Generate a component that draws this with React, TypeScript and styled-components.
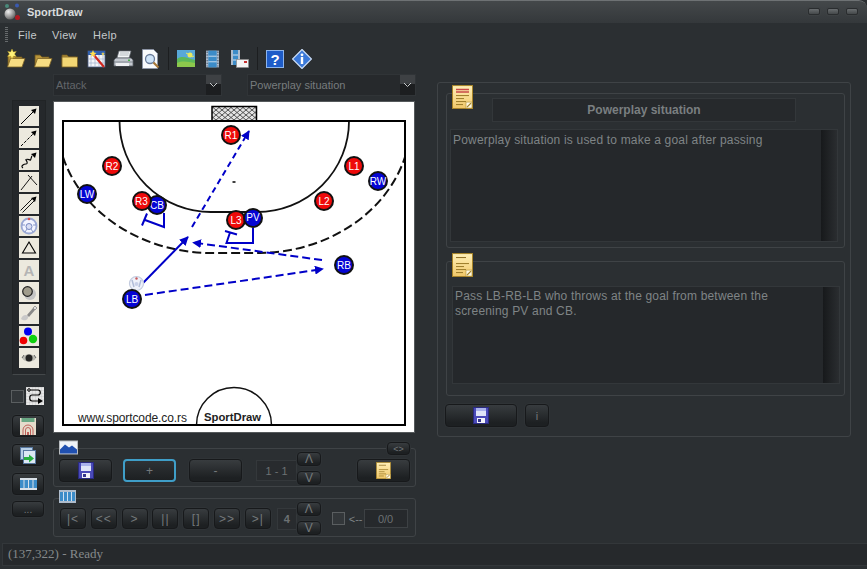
import React from "react";
import styled, { createGlobalStyle, css } from "styled-components";

const GlobalStyle = createGlobalStyle`
  html, body { margin: 0; padding: 0; background: #2b2f32; }
  * { box-sizing: border-box; }
`;

const BLUE = "#0000c8";

/* ---------- small drawings ---------- */

const Floppy: React.FC = () => (
  <svg width="16" height="17" viewBox="0 0 16 17">
    <rect x="0.5" y="0.5" width="15" height="16" fill="#4a4ab8" stroke="#2a2a80" />
    <rect x="3" y="1" width="10" height="8" fill="#dfe4f8" />
    <rect x="3" y="1" width="10" height="3" fill="#aab2ec" />
    <rect x="4" y="11" width="8" height="5" fill="#f2f2f8" />
    <rect x="5" y="12" width="3" height="3" fill="#34348c" />
  </svg>
);

const NoteIcon: React.FC<{ size?: number; red?: boolean }> = ({ size = 21, red }) => (
  <svg width={size} height={size * 1.15} viewBox="0 0 21 24">
    <defs>
      <linearGradient id={red ? "noteR" : "noteY"} x1="0" y1="0" x2="0" y2="1">
        <stop offset="0" stopColor="#fff0b8" />
        <stop offset="1" stopColor="#f0c768" />
      </linearGradient>
    </defs>
    <rect x="0.5" y="0.5" width="20" height="23" fill={`url(#${red ? "noteR" : "noteY"})`} stroke="#a88428" />
    {red ? (
      <path d="M4 4.5h13M4 7h13" stroke="#c84848" strokeWidth="1.4" />
    ) : (
      <path d="M4 4.5h10" stroke="#8a6a20" strokeWidth="1" />
    )}
    <path d="M4 10.5h13M4 13.5h8M4 16.5h10M4 19.5h7" stroke="#9a7a28" strokeWidth="1" />
    <rect x="14" y="17" width="6" height="6" fill="#fff8e0" stroke="#b09030" strokeWidth="0.6" />
    <path d="M15 22l4-4" stroke="#a08028" strokeWidth="1.2" />
  </svg>
);

const Folder: React.FC<{ open?: boolean; star?: boolean }> = ({ open, star }) => (
  <svg width="20" height="20" viewBox="0 0 20 20">
    <path d="M2 6h5l2 2h7v9H2z" fill="#b8943a" stroke="#6a5420" strokeWidth="0.8" />
    {open ? (
      <path d="M4.5 9.500h14.500l-3 8.500H1.500z" fill="#f6dc82" stroke="#7a6024" strokeWidth="0.8" />
    ) : (
      <rect x="2" y="8" width="15.5" height="10" fill="#f2d674" stroke="#7a6024" strokeWidth="0.8" />
    )}
    {star && <path d="M6 0l1.300 3 3-.6-1.800 2.600 1.800 2.600-3-.6L6 10 4.700 7l-3 .6 1.800-2.600-1.800-2.600 3 .6z" fill="#fff27a" stroke="#c9a820" strokeWidth="0.4" />}
  </svg>
);

const WandIcon: React.FC = () => (
  <svg width="20" height="20" viewBox="0 0 20 20">
    <rect x="1" y="2" width="17" height="16" fill="#f4f6fa" stroke="#4a5a80" strokeWidth="0.8" />
    <rect x="1" y="2" width="17" height="4" fill="#2f5fb0" />
    <path d="M4 6v12M8 6v12M12 6v12M16 6v12M1 10h17M1 14h17" stroke="#9fb0cc" strokeWidth="0.7" />
    <path d="M6 5l11 13" stroke="#d02820" strokeWidth="2.2" />
    <path d="M6 1l1 2.500 2.500.5-2 1.500.5 2.500-2-1.500-2 1.500.5-2.500-2-1.500 2.500-.5z" fill="#ffe050" />
    <path d="M16 3l.7 1.500 1.300.3-1.300.8-.7 1.400-.7-1.400-1.300-.8 1.300-.3z" fill="#ffe050" />
  </svg>
);

const PrinterIcon: React.FC = () => (
  <svg width="21" height="20" viewBox="0 0 21 20">
    <path d="M6 2h12l-2 7H4z" fill="#f4f6f8" stroke="#6a7078" strokeWidth="0.7" />
    <path d="M7 4h9M6.500 6h9" stroke="#9aa0a8" strokeWidth="0.7" />
    <path d="M3 9h15l2 2v6H1v-6z" fill="#c4c9d0" stroke="#5a6068" strokeWidth="0.8" />
    <path d="M1 13h19" stroke="#70767e" strokeWidth="0.8" />
    <rect x="3" y="14" width="13" height="3" fill="#eef0f3" />
    <rect x="15" y="10.500" width="2" height="1.500" fill="#48b048" />
  </svg>
);

const PreviewIcon: React.FC = () => (
  <svg width="20" height="20" viewBox="0 0 20 20">
    <path d="M1.500 0.500h11l4 4v15h-15z" fill="#f8fafc" stroke="#8a94a8" strokeWidth="0.8" />
    <circle cx="9" cy="10" r="4.500" fill="#cfe4f8" stroke="#6a7c9a" strokeWidth="1.300" />
    <path d="M12.500 13.500l5 5" stroke="#a87838" strokeWidth="2.200" />
  </svg>
);

const PictureIcon: React.FC = () => (
  <svg width="18" height="17" viewBox="0 0 18 17">
    <rect width="18" height="17" fill="#58a8d8" />
    <path d="M0 9c5-4 10-1 18 1v7H0z" fill="#5cb85a" />
    <path d="M0 13c6-3 12-1 18 0v4H0z" fill="#8cc84c" />
    <circle cx="13" cy="5" r="2.500" fill="#e8e860" />
    <path d="M9 3l2 1M15 7l2-1" stroke="#e8e860" />
  </svg>
);

const FilmIcon: React.FC = () => (
  <svg width="13" height="18" viewBox="0 0 14 18">
    <rect width="14" height="18" fill="#aebccc" />
    <rect x="2.500" width="9" height="18" fill="#3c8cc8" />
    <path d="M2.500 6h9M2.500 12h9" stroke="#cfe0f0" />
    <path d="M1.200 1v16M12.800 1v16" stroke="#4a5a70" strokeWidth="1.200" strokeDasharray="1.500 1.500" />
  </svg>
);

const FilmMailIcon: React.FC = () => (
  <svg width="18" height="18" viewBox="0 0 18 18">
    <rect width="9" height="15" fill="#aebccc" />
    <rect x="2" width="5" height="15" fill="#3c8cc8" />
    <path d="M2 5h5M2 10h5" stroke="#cfe0f0" />
    <rect x="5.500" y="9.500" width="12" height="8" fill="#f4f4f4" stroke="#8a8a8a" strokeWidth="0.7" />
    <rect x="13" y="11" width="3" height="2" fill="#c83030" />
  </svg>
);

const HelpIcon: React.FC = () => (
  <svg width="18" height="18" viewBox="0 0 18 18">
    <rect x="0.500" y="0.500" width="17" height="17" fill="#1e5cc8" stroke="#8cb4ec" />
    <text x="9" y="15" textAnchor="middle" fontFamily="Liberation Sans, sans-serif" fontWeight="700" fontSize="15" fill="#fff">?</text>
  </svg>
);

const InfoIcon: React.FC = () => (
  <svg width="20" height="20" viewBox="0 0 20 20">
    <path d="M10 0.500L19.500 10 10 19.500.5 10z" fill="#3a78d8" stroke="#cfe0f8" strokeWidth="1.200" />
    <circle cx="10" cy="5.800" r="1.400" fill="#fff" />
    <rect x="8.800" y="8" width="2.400" height="7" fill="#fff" />
  </svg>
);

const AppLogo: React.FC = () => (
  <svg width="18" height="18" viewBox="0 0 18 18">
    <defs>
      <radialGradient id="logoBall" cx="0.35" cy="0.3" r="0.8">
        <stop offset="0" stopColor="#f0f0f0" />
        <stop offset="1" stopColor="#555" />
      </radialGradient>
    </defs>
    <circle cx="4" cy="3" r="2" fill="#4a8a7a" />
    <circle cx="14" cy="2.500" r="2" fill="#3a5ab0" />
    <circle cx="7" cy="11" r="5.500" fill="url(#logoBall)" />
    <circle cx="14.500" cy="14.500" r="2.500" fill="#b01820" />
  </svg>
);

const ToolGlyph: React.FC<{ kind: number }> = ({ kind }) => {
  const arrowHead = <path d="M17.500 2.500l-5.500 1.500 4 4z" fill="#000" />;
  switch (kind) {
    case 0:
      return <svg width="20" height="20" viewBox="0 0 20 20"><path d="M2 18L15 5" stroke="#000" strokeWidth="1" />{arrowHead}</svg>;
    case 1:
      return <svg width="20" height="20" viewBox="0 0 20 20"><path d="M2 18L15 5" stroke="#000" strokeWidth="1" strokeDasharray="3 1.500" />{arrowHead}</svg>;
    case 2:
      return <svg width="20" height="20" viewBox="0 0 20 20"><path d="M4 18c-3-2 1-4 3-4s1-3 0-4 3-1 4 0 1-3 2-4" stroke="#000" strokeWidth="1.100" fill="none" />{arrowHead}</svg>;
    case 3:
      return <svg width="20" height="20" viewBox="0 0 20 20"><path d="M2 18L13 4M9 3l9 10" stroke="#000" strokeWidth="0.9" fill="none" /></svg>;
    case 4:
      return <svg width="20" height="20" viewBox="0 0 20 20"><path d="M1.500 16.500L13 5M3.500 18.500L15 7" stroke="#000" strokeWidth="0.9" />{arrowHead}</svg>;
    case 5:
      return (
        <svg width="20" height="20" viewBox="0 0 20 20">
          <circle cx="10" cy="10" r="7.500" fill="#f2f4ff" stroke="#9aa8d4" strokeWidth="1.800" />
          <circle cx="10" cy="10.500" r="3" fill="#d8def4" stroke="#7888c0" />
          <circle cx="10" cy="3" r="1.300" fill="#d85050" />
          <path d="M3 9h3M14 9h3M6 16l2-3M14 16l-2-3" stroke="#8898c8" />
        </svg>
      );
    case 6:
      return <svg width="20" height="20" viewBox="0 0 20 20"><path d="M10 4l6.500 11h-13z" fill="none" stroke="#000" strokeWidth="1.100" /></svg>;
    case 7:
      return <ToolLetter>A</ToolLetter>;
    case 8:
      return (
        <svg width="20" height="20" viewBox="0 0 20 20">
          <circle cx="11" cy="12" r="6" fill="#c4c4c4" />
          <circle cx="8.500" cy="9.500" r="4.800" fill="#a09c8c" stroke="#222" strokeWidth="1.200" />
        </svg>
      );
    case 9:
      return (
        <svg width="20" height="20" viewBox="0 0 20 20">
          <path d="M2 15c1-4 5-5 7-3 1 3-3 6-7 3z" fill="#c8c8c8" />
          <path d="M8 11l6-7 2 2-6 7z" fill="#8a8a8a" />
          <path d="M14 4l2-2 2 2-2 2z" fill="#e0e0e0" stroke="#555" strokeWidth="0.500" />
        </svg>
      );
    case 10:
      return (
        <svg width="20" height="20" viewBox="0 0 20 20">
          <circle cx="9" cy="5.500" r="4" fill="#0000f0" />
          <circle cx="4.500" cy="14.500" r="3.800" fill="#f00000" />
          <circle cx="14" cy="13" r="4.200" fill="#10d010" />
        </svg>
      );
    default:
      return (
        <svg width="20" height="20" viewBox="0 0 20 20">
          <path d="M3 10c3-5 11-5 14 0-3 5-11 5-14 0z" fill="#b8b8b0" />
          <circle cx="10" cy="10" r="3.500" fill="#222" />
          <path d="M3 10l2-3M17 10l-2-3" stroke="#666" />
        </svg>
      );
  }
};

const RouteIcon: React.FC = () => (
  <svg width="18" height="18" viewBox="0 0 18 18">
    <defs>
      <pattern id="routeGrid" width="3" height="3" patternUnits="userSpaceOnUse">
        <rect width="3" height="3" fill="#e8e8e8" />
        <path d="M0 0h3M0 0v3" stroke="#b0b0b0" strokeWidth="0.500" />
      </pattern>
    </defs>
    <rect width="18" height="18" fill="url(#routeGrid)" />
    <circle cx="3" cy="3" r="1.300" fill="none" stroke="#000" />
    <path d="M4.500 3H12c3 0 3 5 0 5H6c-3 0-3 6 0 6h7" fill="none" stroke="#000" strokeWidth="1.200" />
    <path d="M12 11l5 3-5 3z" fill="#000" />
  </svg>
);

const FieldIcon: React.FC = () => (
  <svg width="16" height="17" viewBox="0 0 16 17">
    <rect width="16" height="17" fill="#e4dccb" />
    <rect x="1.500" y="0" width="13" height="4" fill="#6aa884" />
    <path d="M3 17v-5a5 5 0 0 1 10 0v5M5.500 17v-5a2.500 2.500 0 0 1 5 0v5" fill="none" stroke="#c0605a" />
    <rect x="7" y="14" width="2" height="3" fill="#c0605a" />
  </svg>
);

const CopySheetIcon: React.FC = () => (
  <svg width="16" height="17" viewBox="0 0 16 17">
    <rect x="0.500" y="0.500" width="12" height="12" fill="#b8d0e8" stroke="#5878a0" />
    <rect x="3.500" y="3.500" width="12" height="13" fill="#dce8f4" stroke="#5878a0" />
    <path d="M4 10h5V7.500l5 4-5 4V13H4z" fill="#28b040" />
  </svg>
);

const MountainIcon: React.FC = () => (
  <svg width="19" height="15" viewBox="0 0 19 14">
    <rect width="19" height="14" fill="#b8bcc0" />
    <rect x="1" y="1" width="17" height="12" fill="#eef2f8" />
    <path d="M1 13V9l5-5 4 3 3-2 5 4v4z" fill="#2050b0" />
  </svg>
);

/* ---------- window chrome ---------- */

const Window = styled.div`
  width: 867px;
  height: 569px;
  display: flex;
  flex-direction: column;
  overflow: hidden;
  background: #2b2f32;
  font-family: "Liberation Sans", Arial, sans-serif;
  color: #7f8486;
  border-top-right-radius: 8px;
`;

const TitleBar = styled.div`
  height: 23px;
  flex: none;
  display: flex;
  align-items: center;
  padding: 0 9px 1px 3px;
  background: linear-gradient(#44484a, #34383b);
  border-top: 1px solid #6e7274;
  border-top-right-radius: 8px;
`;

const TitleText = styled.span`
  margin-left: 6px;
  font-size: 11px;
  font-weight: 700;
  color: #d9dcdd;
`;

const WindowControls = styled.div`
  margin-left: auto;
  display: flex;
  gap: 7px;
`;

const WindowControl = styled.div`
  width: 12px;
  height: 7px;
  border-radius: 2px;
  background: linear-gradient(#6a6e70, #44484a);
  border: 1px solid #2a2d2f;
  box-shadow: 0 0 0 1px #3e4244;
`;

const MenuBar = styled.div`
  height: 23px;
  flex: none;
  display: flex;
  align-items: center;
  font-size: 11px;
  color: #c4c8ca;
  padding-left: 5px;
`;

const Grip = styled.div`
  width: 3px;
  height: 15px;
  margin-right: 10px;
  background: repeating-linear-gradient(#666a6c 0 1px, transparent 1px 2px);
`;

const MenuItem = styled.span<{ $w: number }>`
  width: ${(p) => p.$w}px;
  letter-spacing: 0.3px;
`;

const Toolbar = styled.div`
  height: 28px;
  flex: none;
  display: flex;
  align-items: center;
  padding: 0 0 3px 2px;
`;

const ToolSlot = styled.div`
  width: 27px;
  display: flex;
  justify-content: center;
  align-items: center;
`;

const ToolbarSeparator = styled.div`
  width: 1px;
  height: 23px;
  margin: 0 3px 0 4px;
  background: #1c1e20;
`;

const Body = styled.div`
  flex: 1;
  min-height: 0;
  display: flex;
`;

/* ---------- left side ---------- */

const LeftArea = styled.div`
  width: 437px;
  flex: none;
  display: flex;
  flex-direction: column;
`;

const ComboRow = styled.div`
  display: flex;
  gap: 25px;
  margin: 0 0 0 53px;
`;

const Combo = styled.div<{ $dim?: boolean }>`
  width: 169px;
  height: 22px;
  display: flex;
  align-items: center;
  padding-left: 2px;
  background: #26292c;
  border: 1px solid #303437;
  font-size: 11px;
  color: ${(p) => (p.$dim ? "#62666a" : "#777c7e")};
`;

const ComboArrow = styled.div`
  margin-left: auto;
  width: 15px;
  height: 20px;
  display: flex;
  align-items: center;
  justify-content: center;
  background: linear-gradient(#3e4144 0 45%, #1c1e20 45%);
`;

const Workspace = styled.div`
  display: flex;
  padding-top: 4px;
`;

const ToolStrip = styled.div`
  width: 53px;
  flex: none;
  display: flex;
  flex-direction: column;
  padding-left: 12px;
`;

const ToolPanel = styled.div`
  width: 34px;
  height: 275px;
  padding-top: 5px;
  display: flex;
  flex-direction: column;
  align-items: center;
  gap: 2px;
  background: #25282b;
  border: 1px solid #212426;
  border-bottom-color: #44484a;
`;

const ToolButton = styled.div`
  width: 20px;
  height: 20px;
  background: #ece9de;
  display: flex;
  align-items: center;
  justify-content: center;
`;

const ToolLetter = styled.span`
  font-size: 15px;
  font-weight: 700;
  color: #b4b4b4;
`;

const ToggleRow = styled.div`
  display: flex;
  align-items: center;
  margin: 12px 0 10px -1px;
  gap: 2px;
`;

const Check = styled.div`
  width: 13px;
  height: 13px;
  flex: none;
  background: #33373a;
  border: 1px solid #5a5e60;
`;

const buttonLook = css`
  display: flex;
  align-items: center;
  justify-content: center;
  flex: none;
  color: #74797b;
  font-size: 12px;
  background: linear-gradient(#383c3f, #1d2022 85%);
  border: 1px solid #17191b;
  border-radius: 4px;
  box-shadow: 0 0 0 1px #2f3336;
`;

const SideButtons = styled.div`
  width: 32px;
  display: flex;
  flex-direction: column;
  gap: 7px;
`;

const SideButton = styled.div`
  ${buttonLook}
  height: 22px;
`;

const MoreButton = styled(SideButton)`
  height: 16px;
  margin-top: -1px;
  font-size: 10px;
`;

const CenterColumn = styled.div`
  width: 363px;
  flex: none;
  display: flex;
  flex-direction: column;
`;

const Canvas = styled.div`
  position: relative;
  width: 360px;
  height: 330px;
  margin: 2px 0 0 1px;
  background: #fff;
  box-shadow: 0 0 0 1px #55595b;
  overflow: hidden;
  svg { display: block; }
`;

const Player = styled.div<{ $x: number; $y: number; $team: "red" | "blue" }>`
  position: absolute;
  left: ${(p) => p.$x - 54 - 10}px;
  top: ${(p) => p.$y - 102 - 10}px;
  width: 20px;
  height: 20px;
  border-radius: 50%;
  display: flex;
  align-items: center;
  justify-content: center;
  font-size: 10px;
  color: #fff;
  background: ${(p) => (p.$team === "red" ? "#ee0a0a" : "#0404d4")};
  border: 2px solid #111;
`;

const FieldLabel = styled.span<{ $bold?: boolean; $x: number }>`
  position: absolute;
  left: ${(p) => p.$x - 54}px;
  top: 309px;
  font-size: ${(p) => (p.$bold ? 11.3 : 12)}px;
  font-weight: ${(p) => (p.$bold ? 700 : 400)};
  letter-spacing: ${(p) => (p.$bold ? 0 : -0.1)}px;
  color: #222;
  white-space: nowrap;
`;

const Panel = styled.div<{ $top: number; $gap: number; $pad: number }>`
  position: relative;
  height: 39px;
  display: flex;
  align-items: center;
  margin-top: ${(p) => p.$gap}px;
  padding: ${(p) => p.$top}px 0 0 ${(p) => p.$pad}px;
  border: 1px solid #3f4346;
  border-radius: 3px;
`;

const Badge = styled.div`
  position: absolute;
  left: 5px;
  top: -9px;
  display: flex;
`;

const FilmBadge = styled.div`
  position: absolute;
  left: 5px;
  top: -9px;
  width: 17px;
  height: 13px;
  background: repeating-linear-gradient(90deg, #3c8cc8 0 3px, #cfe0f0 3px 4px);
  border: 2px solid #aebccc;
  border-left-width: 1px;
  border-right-width: 1px;
`;

const SlimButton = styled.div`
  ${buttonLook}
  position: absolute;
  top: -7px;
  right: 5px;
  width: 23px;
  height: 13px;
  font-size: 9px;
`;

const ActionButton = styled.div<{ $active?: boolean; $ml?: number }>`
  ${buttonLook}
  width: 53px;
  height: 23px;
  margin-left: ${(p) => p.$ml ?? 0}px;
  ${(p) =>
    p.$active &&
    css`
      border: 2px solid #3f9ec8;
      box-shadow: none;
      background: linear-gradient(#2e3235, #1d2022);
    `}
`;

const Spinner = styled.div<{ $ml: number; $lift?: boolean }>`
  display: flex;
  align-items: center;
  margin-left: ${(p) => p.$ml}px;
  margin-bottom: ${(p) => (p.$lift ? 5 : 0)}px;
`;

const SpinValue = styled.div<{ $w: number; $h: number; $bold?: boolean; $drop?: number }>`
  width: ${(p) => p.$w}px;
  height: ${(p) => p.$h}px;
  margin-top: ${(p) => p.$drop ?? 0}px;
  display: flex;
  align-items: center;
  justify-content: center;
  background: #282b2e;
  border: 1px solid #34383b;
  font-size: 11px;
  color: #6c7173;
  font-weight: ${(p) => (p.$bold ? 700 : 400)};
`;

const SpinColumn = styled.div`
  display: flex;
  flex-direction: column;
  gap: 5px;
`;

const SpinButton = styled.div`
  ${buttonLook}
  width: 24px;
  height: 14px;
  font-size: 12px;
`;

const PlayRow = styled.div`
  display: flex;
  gap: 4.8px;
  margin-left: 1px;
`;

const PlayButton = styled.div`
  ${buttonLook}
  width: 26px;
  height: 21px;
  font-size: 12px;
  letter-spacing: 1px;
`;

const LoopGroup = styled.div`
  display: flex;
  align-items: center;
  margin-left: 11px;
  font-size: 11px;
`;

const LoopLabel = styled.span`
  margin: 0 1px 0 4px;
`;

const Counter = styled.div`
  width: 44px;
  height: 19px;
  display: flex;
  align-items: center;
  justify-content: center;
  background: #26292c;
  border: 1px solid #3d4144;
  font-size: 11px;
  color: #6c7173;
`;

/* ---------- right side ---------- */

const RightPanel = styled.div`
  width: 414px;
  height: 355px;
  margin-top: 8px;
  padding: 10px 0 0 8px;
  border: 1px solid #3f4346;
  border-radius: 3px;
`;

const Group = styled.div<{ $h: number; $mt?: number }>`
  position: relative;
  width: 399px;
  height: ${(p) => p.$h}px;
  margin-top: ${(p) => p.$mt ?? 0}px;
  border: 1px solid #3f4346;
  border-radius: 3px;
`;

const GroupIcon = styled.div`
  position: absolute;
  left: 5px;
  top: -9px;
  display: flex;
`;

const TitleBox = styled.div`
  width: 304px;
  height: 24px;
  margin: 4px 0 0 45px;
  display: flex;
  align-items: center;
  justify-content: center;
  background: #26292c;
  border: 1px solid #33373a;
  font-size: 12px;
  font-weight: 700;
  color: #7a7f81;
`;

const NoteBox = styled.div<{ $h: number; $mt: number; $ml: number }>`
  width: 388px;
  height: ${(p) => p.$h}px;
  margin: ${(p) => p.$mt}px 0 0 ${(p) => p.$ml}px;
  display: flex;
  background: #25282b;
  border: 1px solid #33373a;
`;

const NoteText = styled.div<{ $pt: number }>`
  flex: 1;
  padding: ${(p) => p.$pt}px 2px 0;
  font-size: 12px;
  line-height: 15px;
  letter-spacing: 0.18px;
  color: #7f8486;
`;

const FakeScroll = styled.div`
  width: 16px;
  flex: none;
  background: linear-gradient(90deg, #17191b, #2a2d30);
`;

const SaveRow = styled.div`
  display: flex;
  gap: 8px;
  margin: 8px 0 0 -1px;
`;

const SaveButton = styled.div`
  ${buttonLook}
  width: 72px;
  height: 23px;
`;

const InfoButton = styled.div`
  ${buttonLook}
  width: 24px;
  height: 23px;
  font-size: 11px;
`;

const StatusBar = styled.div`
  flex: none;
  height: 23px;
  margin: 0 0 3px 2px;
  display: flex;
  align-items: center;
  padding: 0 0 2px 5px;
  background: #26292c;
  border: 1px solid #33373a;
  border-right: none;
  font-family: "Liberation Serif", "Times New Roman", serif;
  font-size: 13px;
  color: #85898b;
`;

/* ---------- the drawing ---------- */

const players: { id: string; x: number; y: number; team: "red" | "blue" }[] = [
  { id: "R1", x: 231, y: 135, team: "red" },
  { id: "R2", x: 112, y: 166, team: "red" },
  { id: "CB", x: 157, y: 205, team: "blue" },
  { id: "R3", x: 141.5, y: 201, team: "red" },
  { id: "LW", x: 87, y: 194, team: "blue" },
  { id: "L1", x: 354, y: 166, team: "red" },
  { id: "RW", x: 378, y: 181, team: "blue" },
  { id: "L2", x: 324, y: 201, team: "red" },
  { id: "L3", x: 236, y: 220, team: "red" },
  { id: "PV", x: 253, y: 217.5, team: "blue" },
  { id: "RB", x: 344, y: 265, team: "blue" },
  { id: "LB", x: 132, y: 299, team: "blue" },
];

const FieldDrawing: React.FC = () => (
  <svg width="360" height="330" viewBox="54 102 360 330">
    <defs>
      <pattern id="net" width="6" height="5" patternUnits="userSpaceOnUse">
        <rect width="6" height="5" fill="#e4e4e4" />
        <path d="M0 0l3 2.500L6 0M0 5l3-2.500L6 5" fill="none" stroke="#444" strokeWidth="0.9" />
      </pattern>
      <marker id="head" viewBox="0 0 10 10" refX="9" refY="5" markerWidth="4.500" markerHeight="4.500" orient="auto" markerUnits="strokeWidth">
        <path d="M0 0L10 5 0 10z" fill={BLUE} />
      </marker>
      <clipPath id="court">
        <rect x="63" y="121" width="342" height="304" />
      </clipPath>
    </defs>
    <rect x="212" y="106.500" width="44.500" height="14.500" fill="url(#net)" stroke="#000" strokeWidth="1.500" />
    <g clipPath="url(#court)" fill="none" stroke="#111">
      <path d="M119.500 121A91.500 91 0 0 0 211 212H257A92 91 0 0 0 349 121" strokeWidth="1.800" />
      <path d="M63 157A155 132 0 0 0 208 253H260A153 132 0 0 0 405 157" strokeWidth="2" strokeDasharray="9 4" />
      <circle cx="234" cy="425" r="37.500" strokeWidth="1.500" />
    </g>
    <rect x="63" y="121" width="342" height="304" fill="none" stroke="#000" strokeWidth="2" />
    <path d="M232.500 182h3" stroke="#000" strokeWidth="1.500" />
    <g fill="none" stroke={BLUE} strokeWidth="2">
      <path d="M192 227L249 131" strokeDasharray="6 4" markerEnd="url(#head)" />
      <path d="M143 283L188 237" markerEnd="url(#head)" />
      <path d="M145 295L323 269" strokeDasharray="8 4" markerEnd="url(#head)" />
      <path d="M322 260L193 242.500" strokeDasharray="8 4" markerEnd="url(#head)" />
      <path d="M164 213V227L145 220M147 213.500L142 225.500" />
      <path d="M253 228V243H226.500L230 232.500M225 231L237 234.500" />
    </g>
    <circle cx="136.500" cy="283.500" r="7" fill="#eef1fa" stroke="#c2cade" strokeWidth="1.200" />
    <path d="M132 280l2 7M141 280l-2 7" stroke="#b0bcd8" strokeWidth="1.500" />
    <circle cx="136.500" cy="284" r="2" fill="#c8d0e8" />
    <circle cx="136.500" cy="278.500" r="1.200" fill="#c85a5a" />
  </svg>
);

const TOOL_KINDS = [0, 1, 2, 3, 4, 5, 6, 7, 8, 9, 10, 11];
const PLAY_LABELS = ["|<", "<<", ">", "||", "[]", ">>", ">|"];

export default function App() {
  return (
    <>
      <GlobalStyle />
      <Window>
        <TitleBar>
          <AppLogo />
          <TitleText>SportDraw</TitleText>
          <WindowControls>
            <WindowControl />
            <WindowControl />
            <WindowControl />
          </WindowControls>
        </TitleBar>
        <MenuBar>
          <Grip />
          <MenuItem $w={34}>File</MenuItem>
          <MenuItem $w={41}>View</MenuItem>
          <MenuItem $w={40}>Help</MenuItem>
        </MenuBar>
        <Toolbar>
          <ToolSlot><Folder open star /></ToolSlot>
          <ToolSlot><Folder open /></ToolSlot>
          <ToolSlot><Folder /></ToolSlot>
          <ToolSlot><WandIcon /></ToolSlot>
          <ToolSlot><PrinterIcon /></ToolSlot>
          <ToolSlot><PreviewIcon /></ToolSlot>
          <ToolbarSeparator />
          <ToolSlot><PictureIcon /></ToolSlot>
          <ToolSlot><FilmIcon /></ToolSlot>
          <ToolSlot><FilmMailIcon /></ToolSlot>
          <ToolbarSeparator />
          <ToolSlot><HelpIcon /></ToolSlot>
          <ToolSlot><InfoIcon /></ToolSlot>
        </Toolbar>
        <Body>
          <LeftArea>
            <ComboRow>
              <Combo $dim>
                Attack
                <ComboArrow>
                  <svg width="9" height="6" viewBox="0 0 9 6"><path d="M1 1l3.500 3.500L8 1" fill="none" stroke="#c8ccce" /></svg>
                </ComboArrow>
              </Combo>
              <Combo>
                Powerplay situation
                <ComboArrow>
                  <svg width="9" height="6" viewBox="0 0 9 6"><path d="M1 1l3.500 3.500L8 1" fill="none" stroke="#c8ccce" /></svg>
                </ComboArrow>
              </Combo>
            </ComboRow>
            <Workspace>
              <ToolStrip>
                <ToolPanel>
                  {TOOL_KINDS.map((k) => (
                    <ToolButton key={k}>
                      <ToolGlyph kind={k} />
                    </ToolButton>
                  ))}
                </ToolPanel>
                <ToggleRow>
                  <Check />
                  <RouteIcon />
                </ToggleRow>
                <SideButtons>
                  <SideButton><FieldIcon /></SideButton>
                  <SideButton><CopySheetIcon /></SideButton>
                  <SideButton>
                    <svg width="17" height="12" viewBox="0 0 17 12">
                      <rect width="17" height="12" fill="#d8e0e8" />
                      <rect y="2" width="17" height="8" fill="#3c8cc8" />
                      <path d="M4 2v8M8.500 2v8M13 2v8" stroke="#d8e0e8" />
                    </svg>
                  </SideButton>
                  <MoreButton>...</MoreButton>
                </SideButtons>
              </ToolStrip>
              <CenterColumn>
                <Canvas>
                  <FieldDrawing />
                  {players.map((p) => (
                    <Player key={p.id} $x={p.x} $y={p.y} $team={p.team}>
                      {p.id}
                    </Player>
                  ))}
                  <FieldLabel $x={78}>www.sportcode.co.rs</FieldLabel>
                  <FieldLabel $x={204} $bold>SportDraw</FieldLabel>
                </Canvas>
                <Panel $top={6} $gap={16} $pad={5}>
                  <Badge><MountainIcon /></Badge>
                  <SlimButton>&lt;&gt;</SlimButton>
                  <ActionButton><Floppy /></ActionButton>
                  <ActionButton $active $ml={11}>+</ActionButton>
                  <ActionButton $ml={13}>-</ActionButton>
                  <Spinner $ml={14} $lift>
                    <SpinValue $w={41} $h={21} $drop={5}>1 - 1</SpinValue>
                    <SpinColumn>
                      <SpinButton>Λ</SpinButton>
                      <SpinButton>V</SpinButton>
                    </SpinColumn>
                  </Spinner>
                  <ActionButton $ml={36}><NoteIcon size={15} /></ActionButton>
                </Panel>
                <Panel $top={2} $gap={11} $pad={5}>
                  <FilmBadge />
                  <PlayRow>
                    {PLAY_LABELS.map((l) => (
                      <PlayButton key={l}>{l}</PlayButton>
                    ))}
                  </PlayRow>
                  <Spinner $ml={6}>
                    <SpinValue $w={20} $h={22} $bold>4</SpinValue>
                    <SpinColumn>
                      <SpinButton>Λ</SpinButton>
                      <SpinButton>V</SpinButton>
                    </SpinColumn>
                  </Spinner>
                  <LoopGroup>
                    <Check />
                    <LoopLabel>&lt;--</LoopLabel>
                    <Counter>0/0</Counter>
                  </LoopGroup>
                </Panel>
              </CenterColumn>
            </Workspace>
          </LeftArea>
          <RightPanel>
            <Group $h={155}>
              <GroupIcon><NoteIcon red /></GroupIcon>
              <TitleBox>Powerplay situation</TitleBox>
              <NoteBox $h={113} $mt={7} $ml={3}>
                <NoteText $pt={3}>Powerplay situation is used to make a goal after passing</NoteText>
                <FakeScroll />
              </NoteBox>
            </Group>
            <Group $h={135} $mt={13}>
              <GroupIcon><NoteIcon /></GroupIcon>
              <NoteBox $h={98} $mt={24} $ml={5}>
                <NoteText $pt={2}>
                  Pass LB-RB-LB who throws at the goal from between the
                  <br />
                  screening PV and CB.
                </NoteText>
                <FakeScroll />
              </NoteBox>
            </Group>
            <SaveRow>
              <SaveButton><Floppy /></SaveButton>
              <InfoButton>i</InfoButton>
            </SaveRow>
          </RightPanel>
        </Body>
        <StatusBar>(137,322) - Ready</StatusBar>
      </Window>
    </>
  );
}
